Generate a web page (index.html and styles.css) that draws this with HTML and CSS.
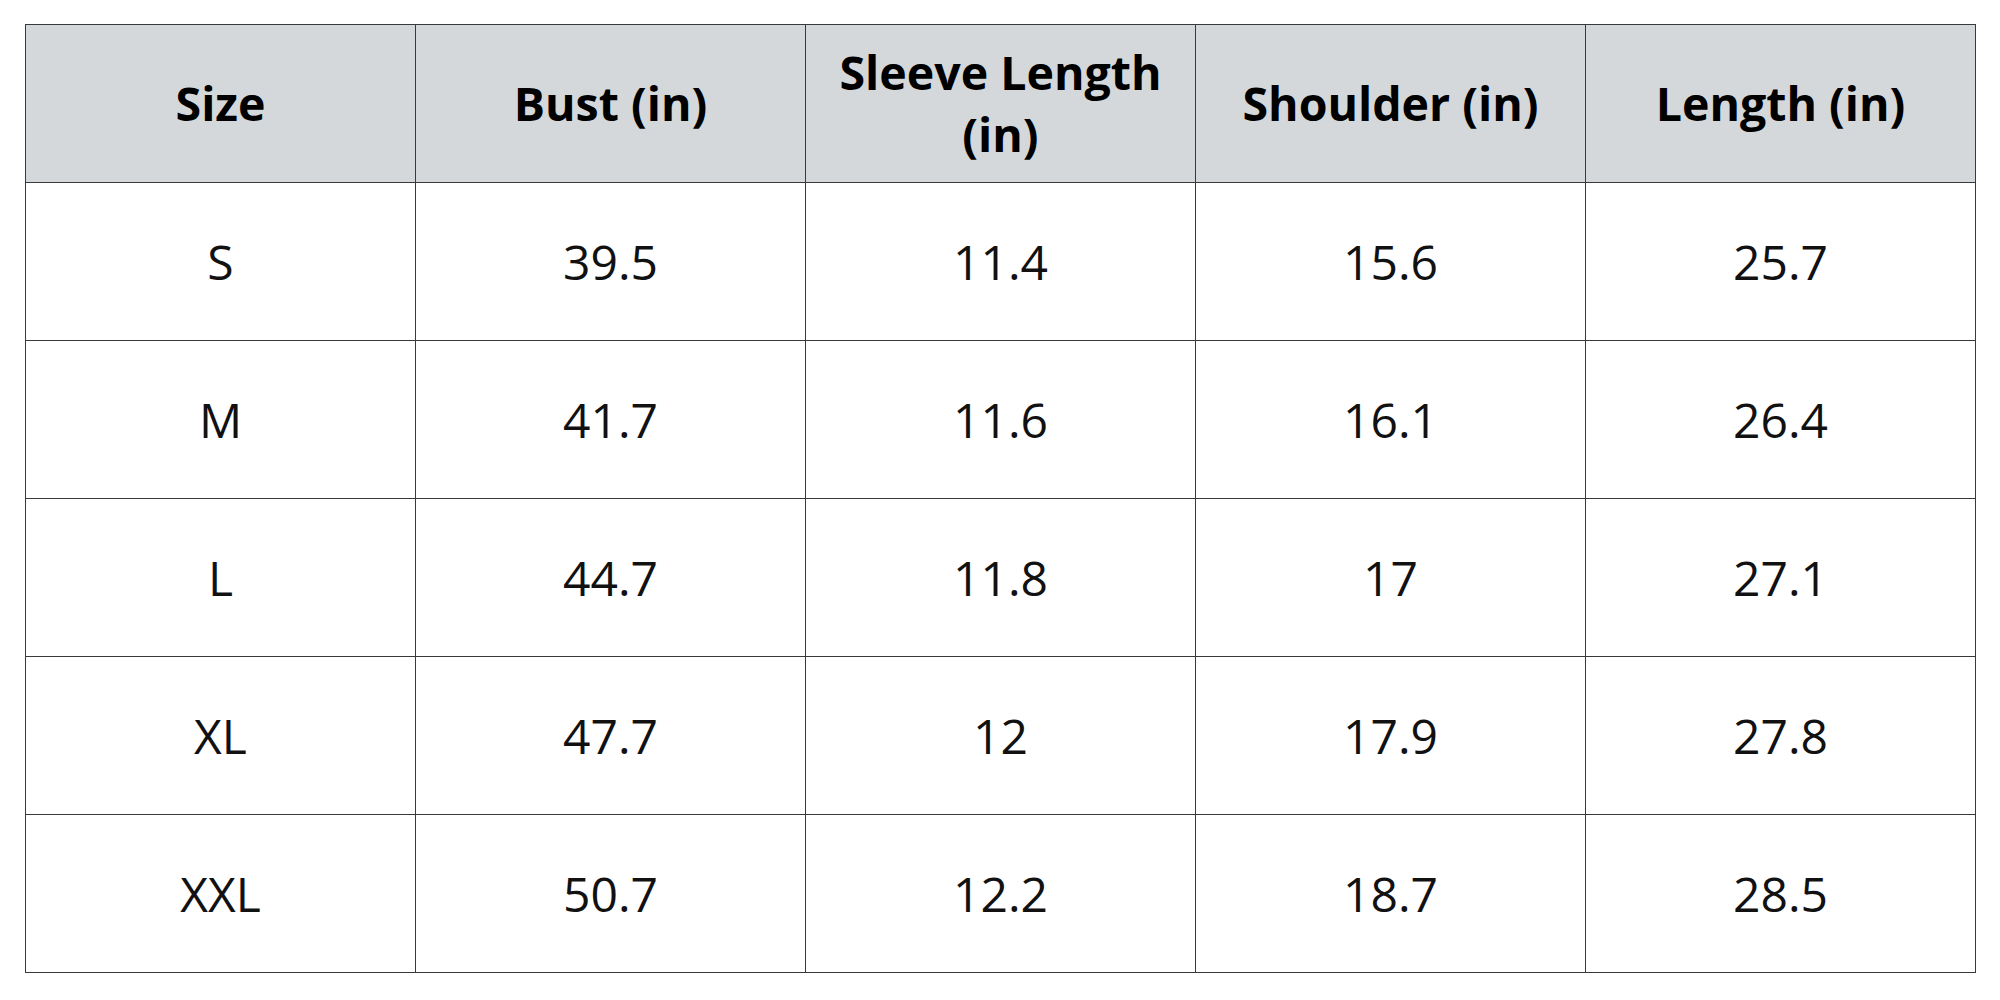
FILE: index.html
```html
<!DOCTYPE html>
<html>
<head>
<meta charset="utf-8">
<link rel="stylesheet" href="styles.css">
</head>
<body>
<div class="page">
<table class="chart">
<colgroup><col><col><col><col><col></colgroup>
<thead>
<tr><th>Size</th><th>Bust (in)</th><th>Sleeve Length (in)</th><th>Shoulder (in)</th><th>Length (in)</th></tr>
</thead>
<tbody>
<tr><td>S</td><td>39.5</td><td>11.4</td><td>15.6</td><td>25.7</td></tr>
<tr><td>M</td><td>41.7</td><td>11.6</td><td>16.1</td><td>26.4</td></tr>
<tr><td>L</td><td>44.7</td><td>11.8</td><td>17</td><td>27.1</td></tr>
<tr><td>XL</td><td>47.7</td><td>12</td><td>17.9</td><td>27.8</td></tr>
<tr><td>XXL</td><td>50.7</td><td>12.2</td><td>18.7</td><td>28.5</td></tr>
</tbody>
</table>
</div>
</body>
</html>
```

FILE: styles.css
```css
html, body {
  margin: 0;
  padding: 0;
  background: #ffffff;
}
.page {
  padding: 24px 0 0 25px;
}
.chart {
  border-collapse: collapse;
  table-layout: fixed;
  width: 1950px;
  font-family: "Open Sans", "Liberation Sans", sans-serif;
  color: #000;
}
.chart col {
  width: 390px;
}
.chart th,
.chart td {
  border: 1.5px solid #3a3a3a;
  height: 158px;
  padding: 0 20px;
  text-align: center;
  vertical-align: middle;
  box-sizing: border-box;
}
.chart th {
  background: #d5d8da;
  font-weight: 700;
  font-size: 46.5px;
  line-height: 1.32;
}
.chart td {
  font-weight: 400;
  font-size: 48px;
  line-height: 1.2;
  color: #111;
}
```
